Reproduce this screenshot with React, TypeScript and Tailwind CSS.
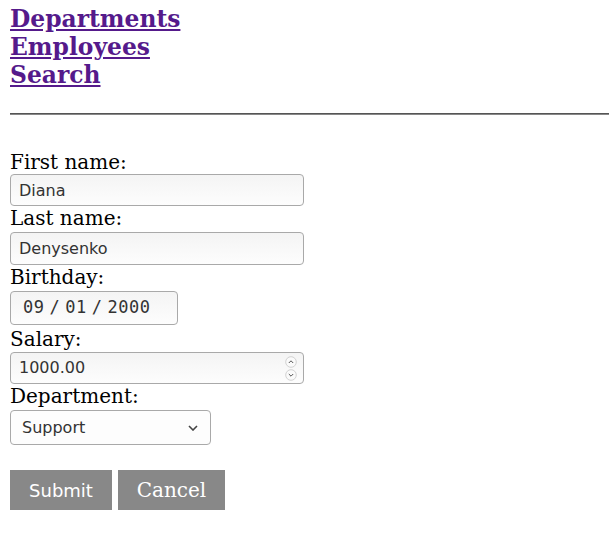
import React from 'react';

const serif = "font-['DejaVu_Serif',serif]";
const sans = "font-['DejaVu_Sans',sans-serif]";

const fieldBox =
  'rounded-[4px] border border-[#a9a9a9] bg-gradient-to-b from-[#f4f4f4] to-[#fdfdfd] text-[#333] text-[16px] outline-none';

const Label: React.FC<{ children: React.ReactNode }> = ({ children }) => (
  <label className={`block text-[20px] leading-[24px] text-black ${serif}`}>{children}</label>
);

const App: React.FC = () => {
  return (
    <div className="w-[609px] min-h-[536px] bg-white pt-[5px] pl-[10px]">
      {/* Nav links */}
      <nav className={`flex flex-col items-start text-[23.4px] leading-[28px] font-bold ${serif}`}>
        <a href="#departments" className="text-[#551a8b] underline">Departments</a>
        <a href="#employees" className="text-[#551a8b] underline">Employees</a>
        <a href="#search" className="text-[#551a8b] underline">Search</a>
      </nav>

      <div className="mt-[24px] h-[2px] border-t border-t-[#555] border-b border-b-[#888]" />

      {/* Form */}
      <form className="mt-[35px] flex flex-col items-start">
        <Label>First name:</Label>
        <input
          readOnly
          value="Diana"
          className={`${fieldBox} ${sans} h-[32px] w-[294px] px-[8px]`}
        />
        <Label>Last name:</Label>
        <input
          readOnly
          value="Denysenko"
          className={`${fieldBox} ${sans} h-[33px] w-[294px] px-[8px] mt-[2px]`}
        />
        <Label>Birthday:</Label>
        <div
          className={`${fieldBox} h-[34px] w-[168px] mt-[2px] flex items-center pl-[12px] font-['DejaVu_Sans_Mono',monospace] text-[17px] tracking-[0.5px] text-[#333]`}
        >
          09<span className="mx-[5px]">/</span>01<span className="mx-[5px]">/</span>2000
        </div>
        <div className="mt-[2px]"><Label>Salary:</Label></div>
        <div className={`${fieldBox} ${sans} relative h-[32px] w-[294px] mt-[1px] flex items-center px-[8px]`}>
          <span>1000.00</span>
          <div className="absolute right-[6px] top-[3px] flex flex-col items-center gap-[1px]">
            <svg width="12" height="12" viewBox="0 0 12 12">
              <circle cx="6" cy="6" r="5.3" fill="#fafafa" stroke="#c8c8c8" strokeWidth="0.8" />
              <path d="M3.8 7 L6 4.8 L8.2 7" fill="none" stroke="#555" strokeWidth="1" />
            </svg>
            <svg width="12" height="12" viewBox="0 0 12 12">
              <circle cx="6" cy="6" r="5.3" fill="#fafafa" stroke="#c8c8c8" strokeWidth="0.8" />
              <path d="M3.8 5 L6 7.2 L8.2 5" fill="none" stroke="#555" strokeWidth="1" />
            </svg>
          </div>
        </div>
        <Label>Department:</Label>
        <div
          className={`${fieldBox} ${sans} h-[35px] w-[201px] mt-[2px] flex items-center justify-between pl-[11px] pr-[12px] bg-gradient-to-b from-[#fdfdfd] to-[#efefef]`}
        >
          <span>Support</span>
          <svg width="10" height="6" viewBox="0 0 10 6">
            <path d="M1 1 L5 5 L9 1" fill="none" stroke="#444" strokeWidth="1.6" />
          </svg>
        </div>

        <div className="mt-[25px] flex gap-[6px]">
          <button
            type="button"
            className={`h-[40px] w-[102px] bg-[#888] text-white text-[18px] ${sans}`}
          >
            Submit
          </button>
          <button
            type="button"
            className={`h-[40px] w-[107px] bg-[#888] text-white text-[20px] ${serif}`}
          >
            Cancel
          </button>
        </div>
      </form>
    </div>
  );
};

export default App;
